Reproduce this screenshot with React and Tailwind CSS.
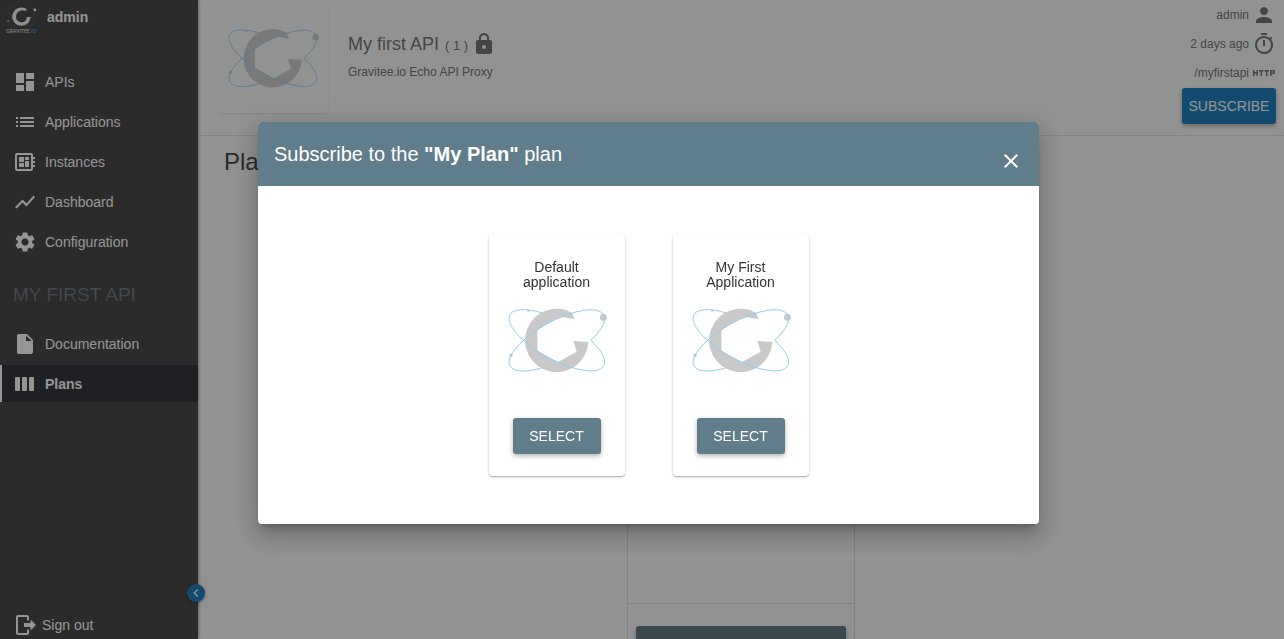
import React from "react";
import {
  MdDashboard,
  MdList,
  MdDeveloperBoard,
  MdShowChart,
  MdSettings,
  MdInsertDriveFile,
  MdPerson,
  MdOutlineTimer,
  MdHttp,
  MdLock,
  MdClose,
  MdChevronLeft,
} from "react-icons/md";

function PlansIcon() {
  return (
    <svg viewBox="0 0 24 24" width="24" height="24" fill="currentColor" aria-hidden="true">
      <rect x="2" y="5" width="5" height="14" rx="0.8" />
      <rect x="9" y="5" width="5" height="14" rx="0.8" />
      <rect x="16" y="5" width="5" height="14" rx="0.8" />
    </svg>
  );
}

function SignOutIcon() {
  return (
    <svg viewBox="0 0 24 24" width="24" height="24" fill="currentColor" aria-hidden="true">
      <path
        d="M14 7.5V4Q14 3 13 3H4Q3 3 3 4V20Q3 21 4 21H13Q14 21 14 20V16.5"
        fill="none"
        stroke="currentColor"
        strokeWidth="2"
      />
      <path d="M10 10H16.5V6.5L22 12L16.5 17.5V14H10Z" />
    </svg>
  );
}

function Orbits({ color, width }) {
  return (
    <g fill="none" stroke={color} strokeWidth={width}>
      <path d="M251 151A160 58 -28.6 1 0 106 233" />
      <path d="M251 151A160 58 28.6 1 1 106 69" />
    </g>
  );
}

function GraviteeMark({ className }) {
  return (
    <svg viewBox="0 0 300 300" className={className} aria-hidden="true">
      <g fill="#c9c9c9">
        <path d="M195 68A95 95 0 1 0 244 156L199 153L209 185L152 217L91 183V120Q126 94 164 81L203 87Z" />
        <circle cx="289" cy="82" r="10.5" />
        <circle cx="12" cy="196" r="5" />
        <circle cx="64" cy="62" r="3.5" />
      </g>
      <Orbits color="#93cff0" width="3" />
    </svg>
  );
}

function BrandLogo() {
  return (
    <svg viewBox="0 0 32 32" width="32" height="32" role="img" aria-label="Gravitee.io">
      <svg x="2" y="-4" width="29" height="29" viewBox="0 0 300 300">
        <Orbits color="#3f5a66" width="6" />
        <path
          d="M195 68A95 95 0 1 0 244 156L206 155Q206 180 188 196Q165 216 132 206Q91 190 93 148Q98 100 142 88Q165 80 203 93Z"
          fill="#f4f4f4"
        />
        <circle cx="289" cy="82" r="14" fill="#fff" />
        <circle cx="12" cy="196" r="10" fill="#aaa" />
      </svg>
      <text x="1" y="27" fontFamily="Lato, sans-serif" fontSize="5" fontWeight="700" fill="#d0d0d0">
        GRAVITEE<tspan fill="#2a9fe0">.IO</tspan>
      </text>
    </svg>
  );
}

function NavItem({ icon, label, active }) {
  return (
    <a
      href="#"
      aria-current={active ? "page" : undefined}
      className={
        active
          ? "flex h-[37px] items-center gap-2 border-l-2 border-white bg-[#1f1f27] pl-[11px] font-bold"
          : "flex h-[37px] items-center gap-2 pl-[13px]"
      }
    >
      {icon}
      <span>{label}</span>
    </a>
  );
}

function Sidebar() {
  return (
    <aside className="relative flex w-[198px] shrink-0 flex-col bg-[#343434] text-sm text-white shadow-[1px_0_3px_rgba(0,0,0,0.35)]">
      <div className="flex h-[42px] items-start gap-2 border-b border-[#2c2c2c] pl-[5px] pt-[6px]">
        <BrandLogo />
        <span className="pl-[2px] font-bold leading-[22px]">admin</span>
      </div>
      <nav className="mt-[21px] flex flex-col gap-[3px]">
        <NavItem icon={<MdDashboard size={24} />} label="APIs" />
        <NavItem icon={<MdList size={24} />} label="Applications" />
        <NavItem icon={<MdDeveloperBoard size={24} />} label="Instances" />
        <NavItem icon={<MdShowChart size={24} />} label="Dashboard" />
        <NavItem icon={<MdSettings size={24} />} label="Configuration" />
      </nav>
      <h2 className="mt-[23px] pl-[13px] text-[19px] leading-[24px] text-[#606b76]">MY FIRST API</h2>
      <nav className="mt-[18px] flex flex-col gap-[3px]">
        <NavItem icon={<MdInsertDriveFile size={24} />} label="Documentation" />
        <NavItem icon={<PlansIcon />} label="Plans" active />
      </nav>
      <a href="#" className="mb-[2px] mt-auto flex items-center gap-1 pl-[14px]">
        <SignOutIcon />
        <span>Sign out</span>
      </a>
      <button
        type="button"
        aria-label="Collapse menu"
        className="absolute -right-[7px] bottom-[37px] flex size-[18px] items-center justify-center rounded-full bg-[#0572b4] shadow-[0_1px_3px_rgba(0,0,0,0.5)]"
      >
        <MdChevronLeft size={16} />
      </button>
    </aside>
  );
}

function MetaRow({ label, icon }) {
  return (
    <div className="flex h-[29px] items-center gap-[3px]">
      <span>{label}</span>
      {icon}
    </div>
  );
}

function ApiHeader() {
  return (
    <header className="flex h-[136px] shrink-0 border-b border-[#dfdfdf] pl-5 pr-2 text-[#666]">
      <div className="mt-[3px] size-[110px] rounded-sm p-[9px] shadow-[0_1px_2px_rgba(0,0,0,0.12)]">
        <GraviteeMark className="size-full" />
      </div>
      <div className="ml-5 mt-8">
        <h1 className="flex h-6 items-center gap-1 text-lg">
          <span className="flex items-baseline gap-[6px]">
            My first API <small className="text-[13px]">( 1 )</small>
          </span>
          <MdLock size={24} />
        </h1>
        <p className="mt-2 text-xs">Gravitee.io Echo API Proxy</p>
      </div>
      <div className="ml-auto flex flex-col items-end text-xs">
        <MetaRow label="admin" icon={<MdPerson size={24} />} />
        <MetaRow label="2 days ago" icon={<MdOutlineTimer size={24} />} />
        <MetaRow label="/myfirstapi" icon={<MdHttp size={24} />} />
        <button
          type="button"
          className="mt-px h-9 w-[94px] rounded-[3px] bg-[#0572b4] text-sm text-white shadow-[0_2px_5px_rgba(0,0,0,0.35)]"
        >
          SUBSCRIBE
        </button>
      </div>
    </header>
  );
}

function PlanCard() {
  return (
    <section className="mx-auto mt-6 w-[228px] border border-[#dadada]">
      <div className="h-[401px] border-b border-[#dadada]" />
      <div className="px-2 py-[22px]">
        <button
          type="button"
          aria-label="Subscribe"
          className="block h-9 w-full rounded-[3px] bg-[#546e7a] shadow-[0_2px_5px_rgba(0,0,0,0.3)]"
        />
      </div>
    </section>
  );
}

function ApplicationCard({ name }) {
  return (
    <article className="flex w-[136px] flex-col items-center rounded-sm bg-white px-[18px] pb-[22px] pt-[26px] shadow-[0_1px_3px_rgba(0,0,0,0.2),0_1px_1px_rgba(0,0,0,0.2)]">
      <h3 className="w-[88px] text-center text-sm leading-[15px] text-[#333]">{name}</h3>
      <GraviteeMark className="size-[100px]" />
      <button
        type="button"
        className="mt-7 h-9 w-[88px] rounded-[3px] bg-[#607d8b] text-sm text-white shadow-[0_2px_5px_rgba(0,0,0,0.3)]"
      >
        SELECT
      </button>
    </article>
  );
}

function SubscribeDialog() {
  return (
    <div className="fixed inset-0 flex items-center justify-center bg-[rgba(33,33,33,0.48)] pl-[13px] pt-[7px]">
      <div
        role="dialog"
        aria-modal="true"
        aria-labelledby="dialog-title"
        className="w-[781px] max-w-[80%] overflow-hidden rounded bg-white shadow-[0_7px_8px_-4px_rgba(0,0,0,0.2),0_13px_19px_2px_rgba(0,0,0,0.14),0_5px_24px_4px_rgba(0,0,0,0.12)]"
      >
        <div className="flex h-16 items-center justify-between bg-[#607d8b] px-4 text-white">
          <h2 id="dialog-title" className="text-xl">
            Subscribe to the <strong>"My Plan"</strong> plan
          </h2>
          <button type="button" aria-label="Close" className="mb-[13px] self-end">
            <MdClose size={24} />
          </button>
        </div>
        <div className="flex justify-center gap-12 py-12">
          <ApplicationCard name="Default application" />
          <ApplicationCard name="My First Application" />
        </div>
      </div>
    </div>
  );
}

export default function App() {
  return (
    <div className="flex h-screen overflow-hidden bg-[#fafafa] font-['Liberation_Sans',Arial,sans-serif]">
      <Sidebar />
      <main className="flex min-w-0 flex-1 flex-col">
        <ApiHeader />
        <div className="pt-[10px]">
          <h2 className="pl-[26px] text-2xl text-[#333]">Plans</h2>
          <PlanCard />
        </div>
      </main>
      <SubscribeDialog />
    </div>
  );
}
